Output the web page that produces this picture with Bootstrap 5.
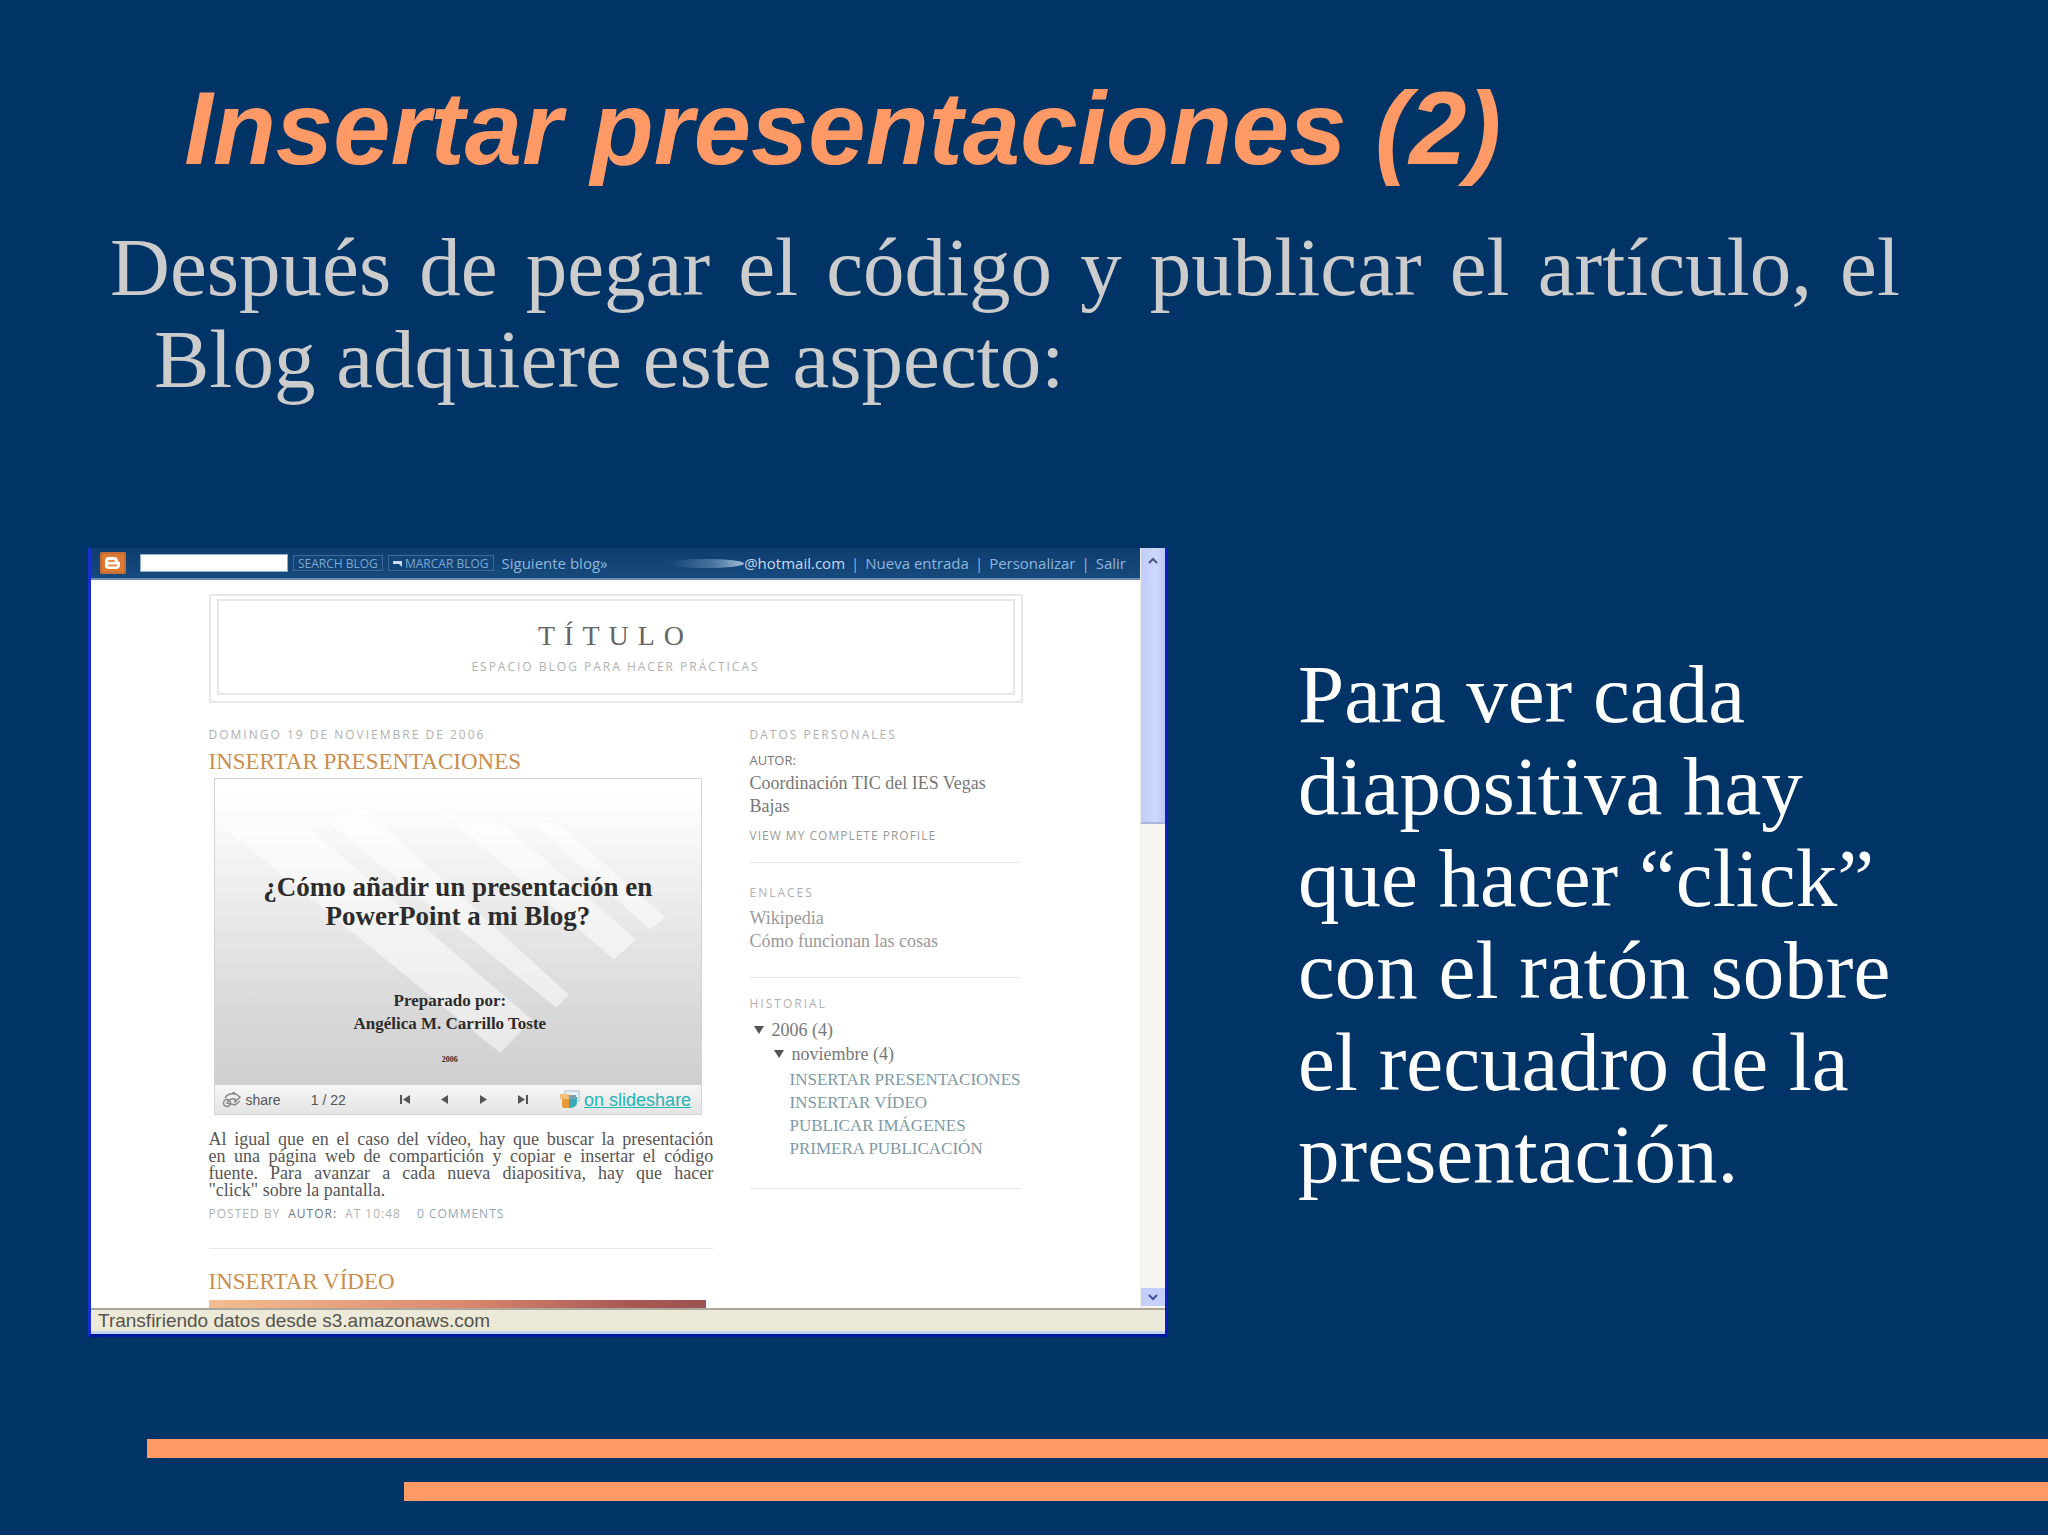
<!DOCTYPE html>
<html lang="es">
<head>
<meta charset="utf-8">
<meta name="viewport" content="width=device-width, initial-scale=1">
<title>Insertar presentaciones (2)</title>
<link rel="stylesheet" href="https://cdn.jsdelivr.net/npm/bootstrap@5.3.0/dist/css/bootstrap.min.css">
<style>
body{background:#003366;font-family:"Liberation Serif",serif;color:#fff}
.slide-title{font:italic bold 103px/118px "Liberation Sans",sans-serif;color:#ff9966;padding:70px 9% 0;margin-bottom:33px}
.intro{font-size:83px;line-height:92px;color:#ccc;text-align:justify;text-indent:-44px;padding:0 148px 0 154px;margin-bottom:143px}
.stage{padding-left:88px;gap:130px}
.side-note{font-size:83px;line-height:92px;padding-top:100px;max-width:600px}
.bar{height:19px;background:#ff9966}
.bar-one{margin:102px 0 24px 147px}
.bar-two{margin:0 0 35px 404px}
/* browser window */
.browser{width:1080px;max-width:56%;flex:none;border:3px solid #1a2fd0;border-top:0;border-right-color:#0a1fc0;border-bottom-color:#0018a0;background:#fff;color:#555}
.blogbar{height:32px;background:linear-gradient(#0f3d70,#164a7d);border-bottom:2px solid #6b8cab;padding:0 14px 0 9px;font:15px/20px "Open Sans",sans-serif;color:#8fb6dc;white-space:nowrap}
.blogbar a{color:#8fb6dc;text-decoration:none}
.blogbar input{width:148px;height:18px;border:1px solid #8fb0cc;background:#fff;border-radius:0;margin-left:14px;padding:0}
.blogbar button{height:16px;border:1px solid #39689a;background:#124477;color:#7ba7d0;font:12px/13px "Open Sans",sans-serif;padding:0 4px;margin-left:5px}
.sep{margin:0 6px}
.smudge{width:76px;height:9px;background:linear-gradient(90deg,transparent,#48759f 60%,#9fbdd6);border-radius:50%}
.account{color:#c5daee}
.scroller{width:25px;background:#f6f5ef;border-left:1px solid #eeede6}
.thumb{height:276px;background:linear-gradient(90deg,#c0cdf8,#cdd8fd 60%,#b9c7f5);border-bottom:2px solid #aab6dc}
.downbtn{height:18px;background:#c4d0fa;margin-bottom:2px}
.blogpage{width:814px;max-width:78%}
.masthead{border:2px solid #e8e8e8;padding:3px 6px 6px;height:109px;margin-top:14px}
.masthead>div{border:2px solid #e8e8e8;height:100%}
.blogname{font-size:28px;line-height:30px;letter-spacing:9px;color:#666;margin:20px 0 6px}
.tag{font:12px/20px "Open Sans",sans-serif;letter-spacing:2px;color:#b0b0b0;text-transform:uppercase;margin:0;white-space:nowrap}
.tight{letter-spacing:1px}
.cols{margin-top:22px}
.posts{width:62%}
.extras{width:270px;max-width:34%;margin-right:3px;font-size:18px;line-height:23px;color:#777}
.extras a{color:#999;text-decoration:none}
.byline{font:13px/23px "Open Sans",sans-serif}
.posttitle{font-size:23px;line-height:26px;color:#c98d4e;white-space:nowrap}
.embed{margin:3px 11px 16px 5px;border:1px solid #d4d4d4}
.deck{height:306px;background:linear-gradient(#fff 5%,#eeeeef 35%,#d9d9da 75%,#cfcfcf);position:relative;color:#2c2c2c;font-weight:bold}
.rays{position:absolute;inset:0;width:100%;height:100%}
.decktext{position:relative;padding-top:94px}
.deck h3{font-size:27px;line-height:29px;font-weight:bold;margin-bottom:58px}
.credit{font-size:17px;line-height:23px}
.yearmark{font-size:8px;line-height:10px;margin-top:20px}
.player{height:29px;background:linear-gradient(#f6f6f6,#e4e4e5);padding:0 10px 0 7px;font:14px/20px "Liberation Sans",sans-serif;color:#555}
.player button{border:0;background:none;padding:0;line-height:0}
.player a{color:#25b5b5;font-size:18px}
.copy{font-size:18px;line-height:17px;color:#555;margin-bottom:5px}
.copy span{display:block;text-align-last:justify}
.copy span:last-child{text-align-last:left}
.rule{border-top:1px solid #e6e6ec}
.comments{color:#8fa9b8}
.video{height:8px;background:linear-gradient(90deg,#f3bd92,#dc8a70 50%,#a85854 85%,#9c5350);margin:5px 7px 0 0}
.tri{border:5px solid transparent;border-top:8px solid #555;border-bottom:0}
.archive{line-height:24px}
.archive ul{line-height:23px;padding-left:40px;margin-top:2px}
.archive a{color:#7e99a5;font-size:17px}
.statusbar{height:26px;background:#ece9d8;border-top:2px solid #aaa89c;border-bottom:3px solid #c3d3f3;font:19px/21px "Liberation Sans",sans-serif;color:#55544a;padding-left:7px}
</style>
<script src="https://cdn.jsdelivr.net/npm/bootstrap@5.3.0/dist/js/bootstrap.bundle.min.js"></script>
</head>
<body>
<main class="min-vh-100 d-flex flex-column overflow-hidden">
  <h1 class="slide-title">Insertar presentaciones (2)</h1>
  <p class="intro">Después de pegar el código y publicar el artículo, el Blog adquiere este aspecto:</p>

  <div class="stage d-flex align-items-start">
    <section class="browser">
      <div class="d-flex">
        <div class="flex-grow-1">
          <nav class="blogbar d-flex align-items-center">
            <svg width="26" height="22" viewBox="0 0 26 22"><rect width="26" height="22" rx="2" fill="#dc7a35"/><rect x="1" y="1" width="24" height="20" rx="2" fill="none" stroke="#b0603a"/><path d="M9 5h5q4 0 4 4 0 1 2 1v3q0 4-4 4H9q-4 0-4-4V9q0-4 4-4z" fill="#fff"/><path d="M9 9h5M9 13.500h7" stroke="#e58a48" stroke-width="2" stroke-linecap="round"/></svg>
            <input type="text" aria-label="Buscar en el blog">
            <button type="button">SEARCH BLOG</button>
            <button type="button"><svg width="9" height="8" viewBox="0 0 9 8"><path d="M0 1h9v6L6 4H0z" fill="#c7def2"/></svg> MARCAR BLOG</button>
            <a href="#" class="ms-2">Siguiente blog»</a>
            <span class="smudge ms-auto"></span><span class="account">@hotmail.com</span>
            <span class="sep">|</span><a href="#">Nueva entrada</a>
            <span class="sep">|</span><a href="#">Personalizar</a>
            <span class="sep">|</span><a href="#">Salir</a>
          </nav>
          <div class="blogpage mx-auto">
            <header class="masthead text-center"><div>
              <h2 class="blogname">TÍTULO</h2>
              <p class="tag">Espacio blog para hacer prácticas</p>
            </div></header>
            <div class="cols d-flex justify-content-between">
              <article class="posts">
                <p class="tag">Domingo 19 de noviembre de 2006</p>
                <h3 class="posttitle mt-1 mb-0">INSERTAR PRESENTACIONES</h3>
                <div class="embed">
                  <div class="deck text-center">
                    <svg class="rays" viewBox="0 0 488 305" preserveAspectRatio="none" fill="#fff" fill-opacity=".5"><path d="M5 45L90 45 318 240 286 273Z"/><path d="M110 40L150 30 355 215 342 228Z"/><path d="M230 35L290 45 422 160 400 180Z"/><path d="M315 40L345 45 452 138 436 150Z"/></svg>
                    <div class="decktext">
                      <h3>¿Cómo añadir un presentación en<br>PowerPoint a mi Blog?</h3>
                      <div class="credit pe-3">Preparado por:<br>Angélica M. Carrillo Toste</div>
                      <div class="yearmark pe-3">2006</div>
                    </div>
                  </div>
                  <div class="player d-flex align-items-center justify-content-between">
                    <span class="d-flex align-items-center gap-1"><svg width="20" height="17" viewBox="0 0 20 17" fill="none" stroke="#888" stroke-width="1.500"><path d="M3 7q3-5 9-4l-1-2 7 5-5 5v-3q-5-1-8 4l8 2 5-4"/><circle cx="5" cy="12" r="3.500"/></svg>share</span>
                    <span>1 / 22</span>
                    <button type="button" aria-label="Primera" class="ms-4"><svg width="11" height="9" fill="#555"><path d="M0 0h2v9H0zM10 0v9L3 4.500z"/></svg></button>
                    <button type="button" aria-label="Anterior"><svg width="8" height="9" fill="#555"><path d="M7 0v9L0 4.500z"/></svg></button>
                    <button type="button" aria-label="Siguiente"><svg width="8" height="9" fill="#555"><path d="M0 0v9l7-4.500z"/></svg></button>
                    <button type="button" aria-label="Última"><svg width="11" height="9" fill="#555"><path d="M0 0v9l7-4.500zM8 0h2v9H8z"/></svg></button>
                    <span class="d-flex align-items-center gap-1"><svg width="21" height="19" viewBox="0 0 21 19"><path d="M6 1h14v10H6z" fill="#e8f2f6" stroke="#a8bcc8"/><path d="M1 4h9v5H1z" fill="#f2c078"/><path d="M3 9h7v9H5q-2 0-2-3z" fill="#ea9a35"/><path d="M10 7h8v5q0 6-8 6z" fill="#39a9b8"/><path d="M10 5h7v4h-7z" fill="#7b9fb5"/></svg><a href="#">on slideshare</a></span>
                  </div>
                </div>
                <p class="copy"><span>Al igual que en el caso del vídeo, hay que buscar la presentación</span><span>en una página web de compartición y copiar e insertar el código</span><span>fuente. Para avanzar a cada nueva diapositiva, hay que hacer</span><span>"click" sobre la pantalla.</span></p>
                <p class="tag tight d-flex">Posted by <span class="text-secondary mx-2">AUTOR:</span> at 10:48 <a href="#" class="comments ms-3 text-decoration-none">0 comments</a></p>
                <div class="rule mt-4 mb-3"></div>
                <h3 class="posttitle pt-1 mb-0">INSERTAR VÍDEO</h3>
                <div class="video"></div>
              </article>
              <aside class="extras">
                <p class="tag">Datos personales</p>
                <div class="byline mt-1">AUTOR:</div>
                <div>Coordinación TIC del IES Vegas Bajas</div>
                <p class="tag tight mt-2"><a href="#">View my complete profile</a></p>
                <div class="rule my-3"></div>
                <p class="tag pt-1 mb-1">Enlaces</p>
                <div><a href="#">Wikipedia</a></div>
                <div><a href="#">Cómo funcionan las cosas</a></div>
                <div class="rule mt-4 mb-3"></div>
                <p class="tag">Historial</p>
                <div class="archive">
                  <div class="d-flex align-items-center gap-2 ps-1 pt-1"><i class="tri"></i><span>2006 (4)</span></div>
                  <div class="d-flex align-items-center gap-2 ps-4"><i class="tri"></i><span>noviembre (4)</span></div>
                  <ul class="list-unstyled text-nowrap pb-1 mb-4">
                    <li><a href="#">INSERTAR PRESENTACIONES</a></li>
                    <li><a href="#">INSERTAR VÍDEO</a></li>
                    <li><a href="#">PUBLICAR IMÁGENES</a></li>
                    <li><a href="#">PRIMERA PUBLICACIÓN</a></li>
                  </ul>
                </div>
                <div class="rule"></div>
              </aside>
            </div>
          </div>
        </div>
        <div class="scroller d-flex flex-column justify-content-between">
          <div class="thumb text-center"><svg width="10" height="8" fill="none" stroke="#4a5685" stroke-width="2"><path d="M1 6l4-4 4 4"/></svg></div>
          <div class="downbtn d-flex align-items-center justify-content-center"><svg width="10" height="8" fill="none" stroke="#3f4fa0" stroke-width="2"><path d="M1 2l4 4 4-4"/></svg></div>
        </div>
      </div>
      <div class="statusbar">Transfiriendo datos desde s3.amazonaws.com</div>
    </section>
    <p class="side-note mb-0">Para ver cada diapositiva hay que hacer “click” con el ratón sobre el recuadro de la presentación.</p>
  </div>

  <div class="bar bar-one"></div>
  <div class="bar bar-two"></div>
</main>
</body>
</html>
